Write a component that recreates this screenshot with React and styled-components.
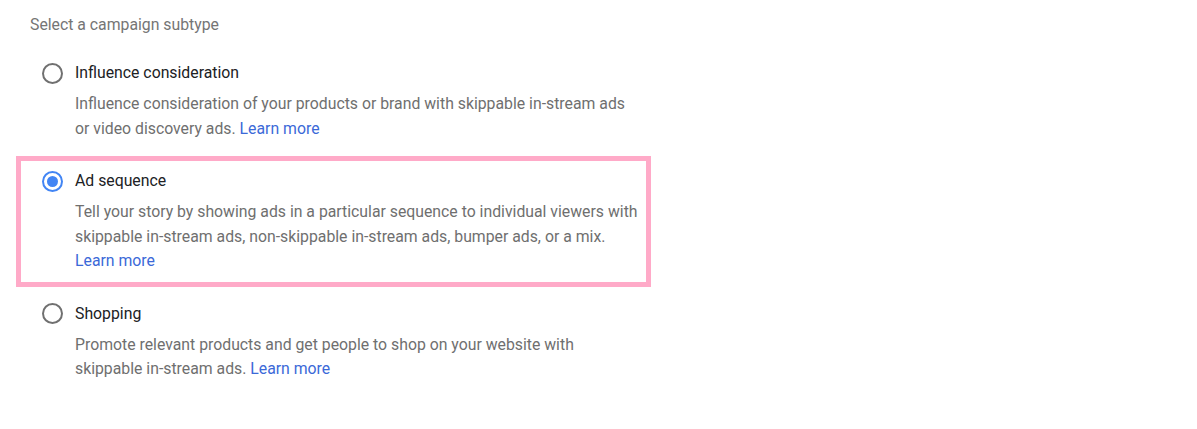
import React from "react";
import styled, { createGlobalStyle } from "styled-components";

const Global = createGlobalStyle`
  html, body { margin: 0; padding: 0; background: #ffffff; }
  body { font-family: Roboto, "Noto Sans", Arial, sans-serif; -webkit-font-smoothing: antialiased; }
`;

const Page = styled.div`
  padding: 13px 0 0 16px;
  display: flex;
  flex-direction: column;
`;

const Heading = styled.div`
  margin-left: 14px;
  font-size: 15.8px;
  line-height: 24px;
  color: #757575;
  margin-bottom: 11px;
`;

const List = styled.div`
  display: flex;
  flex-direction: column;
  gap: 2px;
`;

const Option = styled.label`
  box-sizing: border-box;
  width: 635px;
  border: 5px solid ${(p) => (p.$highlight ? "#ffaac8" : "transparent")};
  padding: 8px 0 8px 21px;
  display: flex;
  gap: 12px;
  cursor: pointer;
`;

const RadioWrap = styled.div`
  height: 24px;
  display: flex;
  align-items: center;
  flex: none;
`;

const Radio = styled.span`
  box-sizing: border-box;
  width: 21px;
  height: 21px;
  border-radius: 50%;
  border: 2px solid ${(p) => (p.$checked ? "#4285f4" : "#707070")};
  display: flex;
  align-items: center;
  justify-content: center;
  &::after {
    content: "";
    width: 11px;
    height: 11px;
    border-radius: 50%;
    background: #4285f4;
    display: ${(p) => (p.$checked ? "block" : "none")};
  }
`;

const Body = styled.div`
  display: flex;
  flex-direction: column;
  width: 575px;
`;

const Title = styled.div`
  font-size: 15.8px;
  line-height: 24px;
  color: #202124;
  margin-bottom: 7px;
`;

const Desc = styled.div`
  font-size: 15.8px;
  line-height: 24.5px;
  color: #6f6f6f;
  white-space: nowrap;
`;

const Link = styled.a`
  color: #3b69d8;
  text-decoration: none;
`;

const options = [
  {
    title: "Influence consideration",
    lines: [
      "Influence consideration of your products or brand with skippable in-stream ads",
      "or video discovery ads. ",
    ],
  },
  {
    title: "Ad sequence",
    lines: [
      "Tell your story by showing ads in a particular sequence to individual viewers with",
      "skippable in-stream ads, non-skippable in-stream ads, bumper ads, or a mix.",
      "",
    ],
    checked: true,
  },
  {
    title: "Shopping",
    lines: [
      "Promote relevant products and get people to shop on your website with",
      "skippable in-stream ads. ",
    ],
  },
];

export default function App() {
  return (
    <>
      <Global />
      <Page>
        <Heading>Select a campaign subtype</Heading>
        <List>
          {options.map((o) => (
            <Option key={o.title} $highlight={o.checked}>
              <RadioWrap>
                <Radio $checked={o.checked} />
              </RadioWrap>
              <Body>
                <Title>{o.title}</Title>
                <Desc>
                  {o.lines.map((l, i) => (
                    <React.Fragment key={i}>
                      {i > 0 && <br />}
                      {l}
                    </React.Fragment>
                  ))}
                  <Link href="#">Learn more</Link>
                </Desc>
              </Body>
            </Option>
          ))}
        </List>
      </Page>
    </>
  );
}
